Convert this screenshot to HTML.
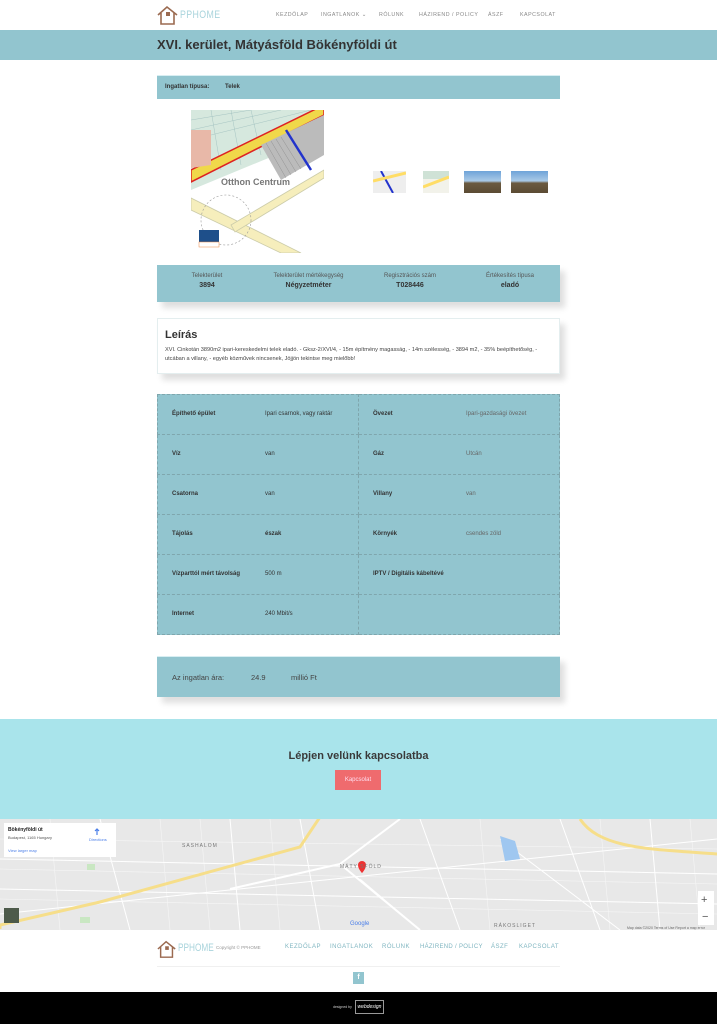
<!DOCTYPE html>
<html><head><meta charset="utf-8">
<style>
*{margin:0;padding:0;box-sizing:border-box}
body{width:717px;height:1024px;overflow:hidden;background:#fff;font-family:"Liberation Sans",sans-serif;color:#333;position:relative}
.abs{position:absolute}
.nav a{position:absolute;top:12px;font-size:5.3px;letter-spacing:.5px;color:#888;text-decoration:none}
.teal{background:#92c5cf}
.shadow{box-shadow:5px 6px 6px rgba(0,0,0,.13)}
table{border-collapse:collapse}
td{border:1px dashed #7fa6ad;height:40px;font-size:6px;vertical-align:middle}
td .k{position:absolute;font-weight:bold;color:#333}
.cell{position:relative}
</style></head><body>
<!-- header -->
<svg class="abs" style="left:157px;top:5px" width="22" height="20" viewBox="0 0 22 20"><path d="M1 10 L10 2 L20 10 M4 8 V19 H17 V8" fill="none" stroke="#9b6a50" stroke-width="1.6"/><rect x="9" y="7" width="4" height="4" fill="#9b6a50"/></svg>
<div class="abs" style="left:180px;top:9px;font-size:11px;color:#a9d4dc;letter-spacing:.5px;transform:scaleX(.8);transform-origin:left">PPHOME</div>
<div class="nav">
<a style="left:276px">KEZDŐLAP</a><a style="left:321px">INGATLANOK ⌄</a><a style="left:379px">RÓLUNK</a><a style="left:419px">HÁZIREND / POLICY</a><a style="left:488px">ÁSZF</a><a style="left:520px">KAPCSOLAT</a>
</div>
<div class="abs teal" style="left:0;top:30px;width:717px;height:30px"></div>
<div class="abs" style="left:157px;top:37px;font-size:13px;font-weight:bold;color:#333">XVI. kerület, Mátyásföld Bökényföldi út</div>
<div class="abs teal" style="left:157px;top:75px;width:403px;height:24px;border-top:1px solid #d8eef2"></div>
<div class="abs" style="left:165px;top:84px;font-size:6px;font-weight:bold">Ingatlan típusa:</div>
<div class="abs" style="left:225px;top:84px;font-size:6px;font-weight:bold">Telek</div>
<!-- main image -->
<svg class="abs" style="left:191px;top:110px" width="133" height="143" viewBox="0 0 133 143">
<rect width="133" height="143" fill="#fff"/>
<polygon points="0,0 133,0 133,25 0,80" fill="#d6e8de"/>
<g stroke="#9bb" stroke-width=".4"><path d="M0 10 L60 0 M0 20 L90 0 M0 30 L120 0 M20 0 L30 60 M40 0 L50 55 M60 0 L70 45"/></g>
<polygon points="0,60 133,-5 133,5 0,72" fill="#f0d84a" stroke="#d22" stroke-width="1.5"/>
<polygon points="70,35 133,5 133,45 90,70" fill="#bbb"/>
<g stroke="#888" stroke-width=".4"><path d="M75 33 L95 68 M80 31 L100 65 M85 29 L105 62 M90 27 L110 59"/></g>
<line x1="95" y1="20" x2="120" y2="60" stroke="#23c" stroke-width="2.5"/>
<polygon points="0,20 20,20 20,55 0,58" fill="#e8b8a8"/>
<text x="30" y="75" font-size="9" font-weight="bold" fill="#777" font-family="Liberation Sans">Otthon Centrum</text>
<polygon points="0,100 90,143 110,143 0,88" fill="#f6eebc" stroke="#cca" stroke-width=".8"/>
<polygon points="40,115 133,60 133,68 44,122" fill="#f6eebc" stroke="#cca" stroke-width=".8"/>
<circle cx="35" cy="110" r="25" fill="none" stroke="#999" stroke-dasharray="2 2" stroke-width=".6"/>
<rect x="8" y="120" width="20" height="12" fill="#1e4f8a"/>
<rect x="8" y="132" width="20" height="5" fill="#fff" stroke="#e84" stroke-width=".5"/>
</svg>
<!-- thumbs -->
<svg class="abs" style="left:373px;top:171px" width="33" height="22"><rect width="33" height="22" fill="#eee"/><line x1="8" y1="0" x2="20" y2="22" stroke="#23c" stroke-width="2"/><line x1="0" y1="10" x2="33" y2="2" stroke="#fd6" stroke-width="3"/></svg>
<svg class="abs" style="left:423px;top:171px" width="26" height="22"><rect width="26" height="22" fill="#f2f2ea"/><rect width="26" height="8" fill="#cfe2d6"/><line x1="0" y1="16" x2="26" y2="6" stroke="#fd6" stroke-width="3"/></svg>
<div class="abs" style="left:464px;top:171px;width:37px;height:22px;background:linear-gradient(#6ea3d8 0,#a9c9e6 45%,#6b5a40 55%,#5b4b33 100%)"></div>
<div class="abs" style="left:511px;top:171px;width:37px;height:22px;background:linear-gradient(#6ea3d8 0,#a9c9e6 45%,#6b5a40 55%,#5b4b33 100%)"></div>
<!-- stats -->
<div class="abs teal shadow" style="left:157px;top:265px;width:403px;height:37px"></div>
<div class="abs" style="left:157px;top:273px;width:403px;display:flex;font-size:6px;text-align:center;color:#555">
<div style="width:100px">Telekterület<br><b style="font-size:7px;color:#333;line-height:14px">3894</b></div>
<div style="width:103px">Telekterület mértékegység<br><b style="font-size:7px;color:#333;line-height:14px">Négyzetméter</b></div>
<div style="width:100px">Regisztrációs szám<br><b style="font-size:7px;color:#333;line-height:14px">T028446</b></div>
<div style="width:100px">Értékesítés típusa<br><b style="font-size:7px;color:#333;line-height:14px">eladó</b></div>
</div>
<!-- desc -->
<div class="abs shadow" style="left:157px;top:318px;width:403px;height:56px;border:1px solid #e4eeef;padding:10px 7px">
<div style="font-size:11px;font-weight:bold;color:#333">Leírás</div>
<div style="font-size:5.6px;line-height:9px;color:#444;margin-top:5px">XVI. Cinkotán 3890m2 ipari-kereskedelmi telek eladó. - Gksz-2/XVI/4, - 15m építmény magasság, - 14m szélesség, - 3894 m2, - 35% beépíthetőség, - utcában a villany, - egyéb közművek nincsenek, Jöjjön tekintse meg mielőbb!</div>
</div>
<!-- table -->
<table class="abs teal" style="left:157px;top:394px;width:403px">
<tr><td class="cell" style="width:201px"><span class="k" style="left:14px;top:16px">Építhető épület</span><span class="k" style="left:107px;top:16px;font-weight:normal">Ipari csarnok, vagy raktár</span></td><td class="cell"><span class="k" style="left:14px;top:16px">Övezet</span><span class="k" style="left:107px;top:16px;font-weight:normal;color:#666">Ipari-gazdasági övezet</span></td></tr>
<tr><td class="cell"><span class="k" style="left:14px;top:16px">Víz</span><span class="k" style="left:107px;top:16px;font-weight:normal">van</span></td><td class="cell"><span class="k" style="left:14px;top:16px">Gáz</span><span class="k" style="left:107px;top:16px;font-weight:normal;color:#666">Utcán</span></td></tr>
<tr><td class="cell"><span class="k" style="left:14px;top:16px">Csatorna</span><span class="k" style="left:107px;top:16px;font-weight:normal">van</span></td><td class="cell"><span class="k" style="left:14px;top:16px">Villany</span><span class="k" style="left:107px;top:16px;font-weight:normal;color:#666">van</span></td></tr>
<tr><td class="cell"><span class="k" style="left:14px;top:16px">Tájolás</span><span class="k" style="left:107px;top:16px">észak</span></td><td class="cell"><span class="k" style="left:14px;top:16px">Környék</span><span class="k" style="left:107px;top:16px;font-weight:normal;color:#666">csendes zöld</span></td></tr>
<tr><td class="cell"><span class="k" style="left:14px;top:16px">Vízparttól mért távolság</span><span class="k" style="left:107px;top:16px;font-weight:normal">500 m</span></td><td class="cell"><span class="k" style="left:14px;top:16px">IPTV / Digitális kábeltévé</span></td></tr>
<tr><td class="cell"><span class="k" style="left:14px;top:16px">Internet</span><span class="k" style="left:107px;top:16px;font-weight:normal">240 Mbit/s</span></td><td class="cell"></td></tr>
</table>
<!-- price -->
<div class="abs teal shadow" style="left:157px;top:656px;width:403px;height:41px;border-top:1px solid #d8eef2"></div>
<div class="abs" style="left:172px;top:673px;font-size:7.5px;color:#444">Az ingatlan ára:</div>
<div class="abs" style="left:251px;top:673px;font-size:7.5px;color:#444">24.9</div>
<div class="abs" style="left:291px;top:673px;font-size:7.5px;color:#444">millió Ft</div>
<!-- contact -->
<div class="abs" style="left:0;top:719px;width:717px;height:101px;background:#a9e4eb"></div>
<div class="abs" style="left:0;top:750px;width:717px;text-align:center;font-size:11px;font-weight:bold;color:#3a3a3a">Lépjen velünk kapcsolatba</div>
<div class="abs" style="left:335px;top:770px;width:46px;height:20px;background:#ef6b6e;color:#fde;font-size:6px;text-align:center;line-height:20px">Kapcsolat</div>
<!-- map -->
<svg class="abs" style="left:0;top:819px" width="717" height="111" viewBox="0 0 717 111">
<rect width="717" height="111" fill="#e8e8e8"/>
<g stroke="#f6f6f6" stroke-width=".6" fill="none">
<path d="M0 20 L717 30 M0 50 L717 65 M0 80 L717 95 M50 0 L60 111 M160 0 L170 111 M200 0 L210 111 M270 0 L280 111 M480 0 L490 111 M600 0 L610 111 M690 0 L700 111"/>
</g>
<g stroke="#fff" stroke-width="1" fill="none">
<path d="M0 40 L717 55 M0 70 L717 85 M100 0 L130 111 M230 0 L240 111 M300 0 L320 111 M420 0 L460 111 M560 0 L600 111 M650 0 L660 111 M0 95 L717 20 M500 20 L620 111 M360 60 L420 111"/>
<path d="M230 70 L340 45 L400 0 M340 45 L420 111" stroke-width="2"/>
</g>
<path d="M0 112 L0 108 L100 85 L300 30 L320 0" stroke="#f6de8a" stroke-width="3" fill="none" transform="translate(0,-2)"/>
<path d="M580 0 C600 30 650 30 717 35" stroke="#f6de8a" stroke-width="3" fill="none"/>
<path d="M500 17 L515 22 L520 40 L505 42 Z" fill="#9fc7f0"/>
<rect x="87" y="45" width="8" height="6" fill="#c9e7c2"/><rect x="80" y="98" width="10" height="6" fill="#c9e7c2"/>
<path d="M358 46 a4 4 0 1 1 8 0 c0 4 -4 8 -4 8 c0 0 -4 -4 -4 -8z" fill="#e33"/>
<text x="182" y="28" font-size="5" fill="#777" letter-spacing="1" font-family="Liberation Sans">SASHALOM</text>
<text x="340" y="49" font-size="5" fill="#777" letter-spacing="1" font-family="Liberation Sans">MÁTY   SFÖLD</text>
<text x="494" y="108" font-size="5" fill="#777" letter-spacing="1" font-family="Liberation Sans">RÁKOSLIGET</text>
<text x="350" y="106" font-size="6" fill="#4a7ee8" font-family="Liberation Sans">Google</text>
<text x="627" y="110" font-size="3.5" fill="#666" font-family="Liberation Sans">Map data ©2020  Terms of Use  Report a map error</text>
<rect x="698" y="72" width="16" height="34" fill="#fff"/>
<text x="701" y="84" font-size="11" fill="#555" font-family="Liberation Sans">+</text>
<text x="702" y="101" font-size="11" fill="#555" font-family="Liberation Sans">−</text>
<rect x="4" y="89" width="15" height="15" fill="#4d5a4a"/>
<rect x="4" y="4" width="112" height="34" fill="#fff"/>
<text x="8" y="12" font-size="5" font-weight="bold" fill="#222" font-family="Liberation Sans">Bökényföldi út</text>
<text x="8" y="20" font-size="4" fill="#555" font-family="Liberation Sans">Budapest, 1165 Hungary</text>
<text x="8" y="33" font-size="4" fill="#4a7ee8" font-family="Liberation Sans">View larger map</text>
<text x="89" y="22" font-size="4" fill="#4a7ee8" font-family="Liberation Sans">Directions</text>
<path d="M97 10 v6 M95 12 l2 -2 l2 2" stroke="#4a7ee8" stroke-width="1.2" fill="none"/>
</svg>
<!-- footer -->
<svg class="abs" style="left:157px;top:939px" width="20" height="20" viewBox="0 0 22 20"><path d="M1 10 L10 2 L20 10 M4 8 V19 H17 V8" fill="none" stroke="#9b6a50" stroke-width="1.6"/><rect x="9" y="7" width="4" height="4" fill="#9b6a50"/></svg>
<div class="abs" style="left:178px;top:942px;font-size:11px;color:#a9d4dc;transform:scaleX(.75);transform-origin:left">PPHOME</div>
<div class="abs" style="left:216px;top:945px;font-size:4.5px;color:#999">Copyright © PPHOME</div>
<div class="abs" style="top:944px;font-size:6px;color:#7fb5c0;letter-spacing:.5px;left:285px">KEZDŐLAP</div>
<div class="abs" style="top:944px;font-size:6px;color:#7fb5c0;letter-spacing:.5px;left:330px">INGATLANOK</div>
<div class="abs" style="top:944px;font-size:6px;color:#7fb5c0;letter-spacing:.5px;left:382px">RÓLUNK</div>
<div class="abs" style="top:944px;font-size:6px;color:#7fb5c0;letter-spacing:.3px;left:420px">HÁZIREND / POLICY</div>
<div class="abs" style="top:944px;font-size:6px;color:#7fb5c0;letter-spacing:.5px;left:491px">ÁSZF</div>
<div class="abs" style="top:944px;font-size:6px;color:#7fb5c0;letter-spacing:.5px;left:519px">KAPCSOLAT</div>
<div class="abs" style="left:157px;top:966px;width:403px;height:1px;background:#f0f0f0"></div>
<div class="abs" style="left:353px;top:972px;width:11px;height:12px;background:#92c5cf;color:#fff;font-size:7px;text-align:center;line-height:12px;font-weight:bold">f</div>
<div class="abs" style="left:0;top:992px;width:717px;height:32px;background:#000"></div>
<div class="abs" style="left:333px;top:1005px;font-size:3.5px;color:#ccc">designed by</div>
<div class="abs" style="left:355px;top:1000px;width:29px;height:14px;border:1px solid #999;color:#fff;font-size:5px;font-style:italic;text-align:center;line-height:12px">webdesign</div>
</body></html>
